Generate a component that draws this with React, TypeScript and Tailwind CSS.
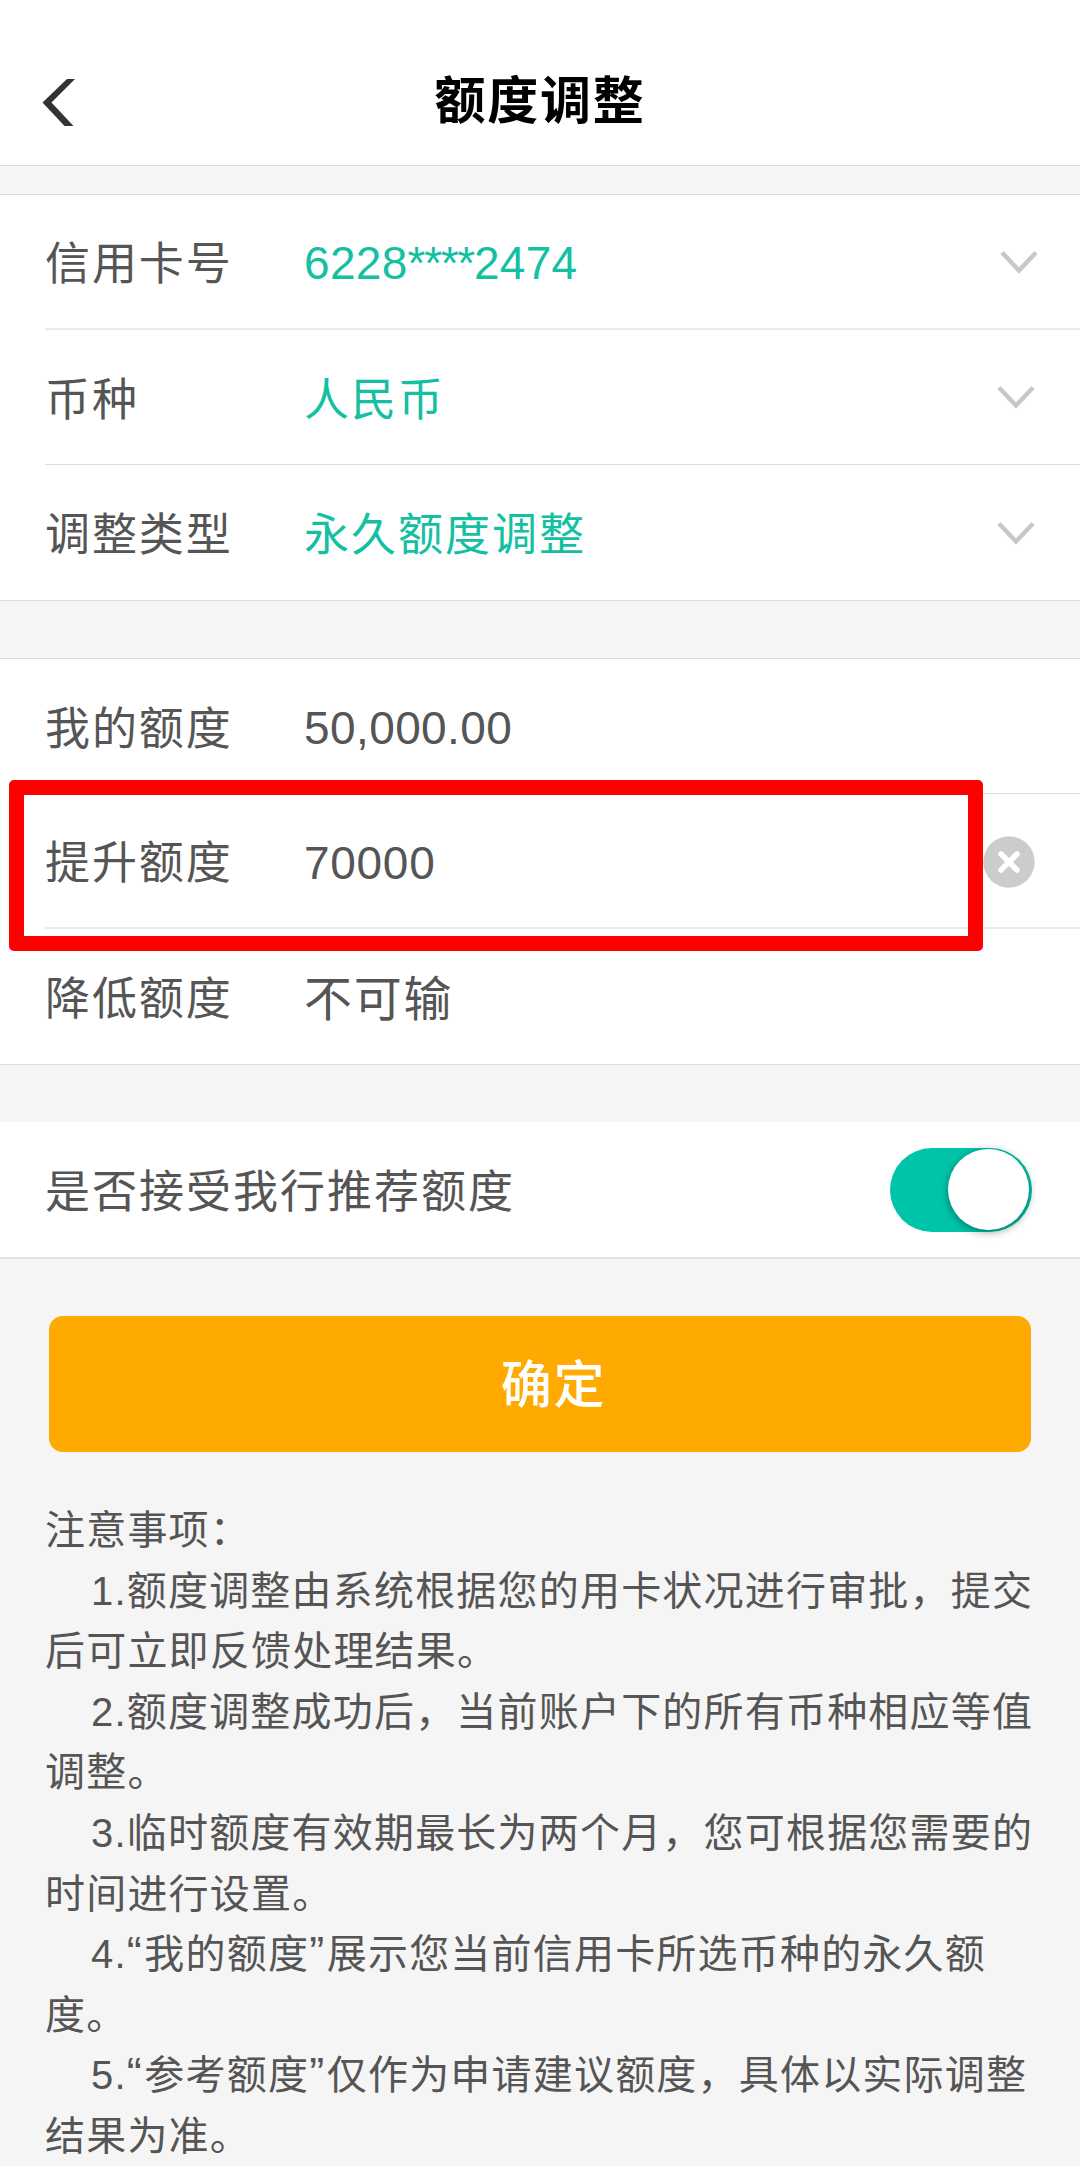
import type { ReactNode } from 'react';

function Chevron({ className }: { className: string }) {
  return (
    <svg className={className} width="38" height="26" viewBox="0 0 38 26" fill="none">
      <path d="M2 3.5 L19 21.5 L36 3.5" stroke="#c8c8c8" strokeWidth="4.5" />
    </svg>
  );
}

const dividers = {
  none: 'ml-[45px] flex h-[135px] items-center',
  thin: 'ml-[45px] flex h-[135px] items-center border-b border-[#dcdcdc]',
  soft: 'ml-[45px] flex h-[135px] items-center border-b-2 border-[#ebebeb]',
};

function Row({ label, children, divider }: { label: string; children: ReactNode; divider: keyof typeof dividers }) {
  return (
    <div className={dividers[divider]}>
      <span className="w-[259px] shrink-0 pt-[6px] text-[45px] tracking-[1.9px]">{label}</span>
      {children}
    </div>
  );
}

const notes: { text: string; indent?: boolean }[] = [
  { text: '注意事项：' },
  { text: '1.额度调整由系统根据您的用卡状况进行审批，提交', indent: true },
  { text: '后可立即反馈处理结果。' },
  { text: '2.额度调整成功后，当前账户下的所有币种相应等值', indent: true },
  { text: '调整。' },
  { text: '3.临时额度有效期最长为两个月，您可根据您需要的', indent: true },
  { text: '时间进行设置。' },
  { text: '4.“我的额度”展示您当前信用卡所选币种的永久额', indent: true },
  { text: '度。' },
  { text: '5.“参考额度”仅作为申请建议额度，具体以实际调整', indent: true },
  { text: '结果为准。' },
];

// Curly quotes are set slightly larger than the surrounding text.
function NoteText({ text }: { text: string }) {
  return (
    <>
      {text.split(/([“”])/).map((part, i) =>
        part === '“' || part === '”' ? (
          <span key={i} className="text-[45px] leading-none tracking-[2.6px]">
            {part}
          </span>
        ) : (
          part
        ),
      )}
    </>
  );
}

export default function App() {
  return (
    <div
      lang="zh-CN"
      className="flex h-[2166px] w-[1080px] flex-col overflow-hidden whitespace-nowrap bg-[#f5f5f5] font-['Liberation_Sans','Noto_Sans_CJK_SC',sans-serif] leading-none text-[#555]"
    >
      <header className="grid h-[166px] shrink-0 grid-cols-[1fr_auto_1fr] items-start border-b border-[#dcdcdc] bg-white">
        <svg className="mt-[78px] ml-[42px]" width="34" height="50" viewBox="0 0 34 50">
          <path d="M25 1 H33 L9.5 24.5 L31.5 48 H22.5 L0.5 24.5 Z" fill="#333" />
        </svg>
        <h1 className="mt-[76px] text-[51px] font-bold tracking-[1.7px] text-black">额度调整</h1>
      </header>

      <section className="mt-[28px] shrink-0 border-y border-[#dcdcdc] bg-white">
        <Row label="信用卡号" divider="soft">
          <span className="pt-[3px] text-[46px] tracking-[0.3px] text-[#14bfa2]">
            6228<span className="tracking-[-1.3px]">****</span>2474
          </span>
          <Chevron className="mr-[42px] ml-auto" />
        </Row>
        <Row label="币种" divider="thin">
          <span className="pt-[6px] text-[45px] tracking-[2px] text-[#14bfa2]">人民币</span>
          <Chevron className="mr-[45px] ml-auto" />
        </Row>
        <Row label="调整类型" divider="none">
          <span className="pt-[6px] text-[45px] tracking-[2px] text-[#14bfa2]">永久额度调整</span>
          <Chevron className="mr-[45px] ml-auto" />
        </Row>
      </section>

      <section className="relative mt-[57px] shrink-0 border-y border-[#dcdcdc] bg-white">
        <Row label="我的额度" divider="thin">
          <span className="pt-[3px] text-[46px] tracking-[0.4px]">50,000.00</span>
        </Row>
        <Row label="提升额度" divider="soft">
          <span className="pt-[5px] text-[46px] tracking-[0.7px]">70000</span>
          <svg className="mt-[2px] mr-[45px] ml-auto" width="52" height="52" viewBox="0 0 52 52">
            <circle cx="26" cy="26" r="25.7" fill="#ccc" />
            <path d="M18 18 L34 34 M34 18 L18 34" stroke="#fff" strokeWidth="5.5" strokeLinecap="round" />
          </svg>
        </Row>
        <Row label="降低额度" divider="none">
          <span className="pt-[6px] text-[48px] tracking-[1.7px]">不可输</span>
        </Row>
        <div className="absolute top-[121px] left-[9px] h-[171px] w-[974px] rounded-[5px] bg-[#ff0000] [clip-path:polygon(evenodd,0_0,100%_0,100%_100%,0_100%,0_0,15px_15px,15px_156px,959px_156px,959px_15px,15px_15px)]" />
      </section>

      <section className="mt-[57px] flex h-[137px] shrink-0 items-center border-b-2 border-[#e0e0e0] bg-white pr-[48px] pl-[45px]">
        <span className="pt-[6px] text-[45px] tracking-[2px]">是否接受我行推荐额度</span>
        <span className="mt-px ml-auto flex h-[84px] w-[142px] justify-end rounded-full bg-[#00c4aa] pt-px pr-[3px]">
          <span className="size-[81px] rounded-full bg-white shadow-[0_2px_9px_rgba(0,0,0,0.4)]" />
        </span>
      </section>

      <button className="mx-[49px] mt-[57px] flex h-[136px] shrink-0 items-center justify-center rounded-[14px] bg-[#ffaa00] pt-[3px] pl-[27px] text-[51px] font-medium tracking-[1.8px] text-white">
        确定
      </button>

      <div className="mt-[48px] shrink-0 pl-[45px] text-[40px] leading-[60.6px] tracking-[1.2px]">
        {notes.map((n) => (
          <p key={n.text} className={n.indent ? 'h-[60.6px] pl-[46px]' : 'h-[60.6px]'}>
            <NoteText text={n.text} />
          </p>
        ))}
      </div>
    </div>
  );
}
